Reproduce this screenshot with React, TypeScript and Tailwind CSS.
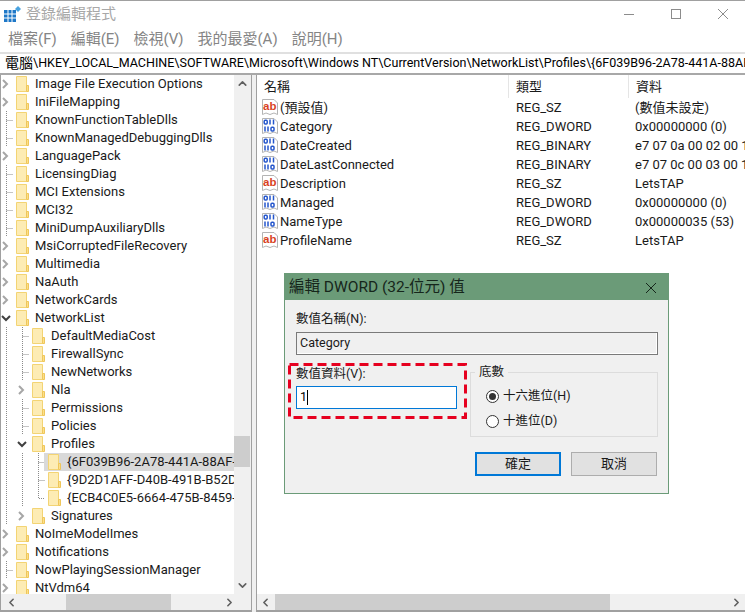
import { ChevronDown, ChevronLeft, ChevronRight, ChevronUp } from 'lucide-react';

type Cell = '' | 'line' | 'tee' | 'corner' | 'closed' | 'open';

const tree: { name: string; cells: Cell[]; selected?: boolean }[] = [
  { name: 'Image File Execution Options', cells: ['closed'] },
  { name: 'IniFileMapping', cells: ['closed'] },
  { name: 'KnownFunctionTableDlls', cells: ['tee'] },
  { name: 'KnownManagedDebuggingDlls', cells: ['tee'] },
  { name: 'LanguagePack', cells: ['closed'] },
  { name: 'LicensingDiag', cells: ['tee'] },
  { name: 'MCI Extensions', cells: ['tee'] },
  { name: 'MCI32', cells: ['tee'] },
  { name: 'MiniDumpAuxiliaryDlls', cells: ['tee'] },
  { name: 'MsiCorruptedFileRecovery', cells: ['closed'] },
  { name: 'Multimedia', cells: ['closed'] },
  { name: 'NaAuth', cells: ['closed'] },
  { name: 'NetworkCards', cells: ['closed'] },
  { name: 'NetworkList', cells: ['open'] },
  { name: 'DefaultMediaCost', cells: ['line', 'tee'] },
  { name: 'FirewallSync', cells: ['line', 'tee'] },
  { name: 'NewNetworks', cells: ['line', 'tee'] },
  { name: 'Nla', cells: ['line', 'closed'] },
  { name: 'Permissions', cells: ['line', 'tee'] },
  { name: 'Policies', cells: ['line', 'tee'] },
  { name: 'Profiles', cells: ['line', 'open'] },
  { name: '{6F039B96-2A78-441A-88AF-', cells: ['line', 'line', 'tee'], selected: true },
  { name: '{9D2D1AFF-D40B-491B-B52D', cells: ['line', 'line', 'tee'] },
  { name: '{ECB4C0E5-6664-475B-8459-', cells: ['line', 'line', 'corner'] },
  { name: 'Signatures', cells: ['line', 'closed'] },
  { name: 'NoImeModelImes', cells: ['closed'] },
  { name: 'Notifications', cells: ['closed'] },
  { name: 'NowPlayingSessionManager', cells: ['tee'] },
  { name: 'NtVdm64', cells: ['closed'] },
];

const values = [
  { name: '(預設值)', kind: 'sz', type: 'REG_SZ', data: '(數值未設定)' },
  { name: 'Category', kind: 'bin', type: 'REG_DWORD', data: '0x00000000 (0)' },
  { name: 'DateCreated', kind: 'bin', type: 'REG_BINARY', data: 'e7 07 0a 00 02 00 1f' },
  { name: 'DateLastConnected', kind: 'bin', type: 'REG_BINARY', data: 'e7 07 0c 00 03 00 1f' },
  { name: 'Description', kind: 'sz', type: 'REG_SZ', data: 'LetsTAP' },
  { name: 'Managed', kind: 'bin', type: 'REG_DWORD', data: '0x00000000 (0)' },
  { name: 'NameType', kind: 'bin', type: 'REG_DWORD', data: '0x00000035 (53)' },
  { name: 'ProfileName', kind: 'sz', type: 'REG_SZ', data: 'LetsTAP' },
];

function TreeCell({ kind }: { kind: Cell }) {
  return (
    <svg width="16" height="18" viewBox="0 0 16 18" className="shrink-0">
      {(kind === 'line' || kind === 'tee' || kind === 'corner') && (
        <path
          d={kind === 'corner' ? 'M6.5 0V9.5H13' : kind === 'tee' ? 'M6.5 0V18M6.5 9.5H13' : 'M6.5 0V18'}
          fill="none"
          stroke="#8a8a8a"
          strokeDasharray="1 1"
        />
      )}
      {kind === 'closed' && <path d="M3 5l4 4-4 4" fill="none" stroke="#a6a6a6" strokeWidth="2" />}
      {kind === 'open' && <path d="M2 7l4 4 4-4" fill="none" stroke="#404040" strokeWidth="2" />}
    </svg>
  );
}

function Folder() {
  return (
    <svg width="13" height="18" viewBox="0 0 13 18" className="shrink-0">
      <path d="M0.5 1.5H10.5V16.5H0.5Z" fill="#fdecb4" stroke="#f3d474" />
      <path d="M10.5 10.5H12.5V16.5H10.5Z" fill="#fbe08a" stroke="#efc65a" />
    </svg>
  );
}

function ValueIcon({ kind }: { kind: string }) {
  return (
    <svg width="16" height="17" viewBox="0 0 16 17" className="shrink-0">
      <path d="M0.5 0.5H12L15.5 4V15.5L12 14L8 15.5L4 14L0.5 15.5Z" fill="#fff" stroke="#b4b4b4" />
      {kind === 'sz' ? (
        <text x="1" y="11" fontSize="11.5" fontWeight="700" fill="#d8431f" fontFamily="Liberation Sans, sans-serif">
          ab
        </text>
      ) : (
        <g fill="none" stroke="#2456cc" strokeWidth="1.5">
          <rect x="2.2" y="2.2" width="3" height="3.8" rx="1" />
          <path d="M8 1.5V6.5M11.5 1.5V6.5" />
          <path d="M3 8.5V13.5M6 8.5V13.5" />
          <rect x="9" y="9.2" width="3" height="3.8" rx="1" />
        </g>
      )}
    </svg>
  );
}

export default function App() {
  return (
    <div
      className="relative w-[745px] h-[612px] overflow-hidden flex flex-col bg-white text-[13px] text-[#1a1a1a]"
      style={{ fontFamily: 'Roboto, "Noto Sans CJK TC", sans-serif' }}
    >
      {/* title bar */}
      <div className="h-[27px] shrink-0 border-t border-[#a0a0a0] flex items-center pl-[4px] text-[#a8a8a8] text-[15px]">
        <svg width="17" height="17" viewBox="0 0 17 17" className="shrink-0 mr-[5px]">
          <path d="M0 4h12v12H0z" fill="#1e78c8" />
          <path d="M4 4v12M8 4v12M0 8h12M0 12h12" stroke="#fff" />
          <path d="M14 0l3 3-3 3-3-3z" fill="#4aa3e0" />
        </svg>
        <span>登錄編輯程式</span>
        <div className="ml-auto flex items-center pr-[17px] gap-[37px]">
          <div className="w-[10px] h-px bg-[#8c8c8c]" />
          <div className="w-[10px] h-[10px] border border-[#8c8c8c]" />
          <svg width="10" height="10" viewBox="0 0 10 10">
            <path d="M0 0l10 10M10 0L0 10" stroke="#8c8c8c" />
          </svg>
        </div>
      </div>

      {/* menu */}
      <div className="h-[24px] shrink-0 flex items-center gap-[14px] pl-[8px] text-[15px] text-[#858585]">
        <span>檔案(F)</span>
        <span>編輯(E)</span>
        <span>檢視(V)</span>
        <span>我的最愛(A)</span>
        <span>說明(H)</span>
      </div>

      {/* address bar */}
      <div className="h-[23px] mt-[1px] shrink-0 border-y-2 border-[#a8a8a8] border-t-[#e0e0e0] flex items-center pl-[5px] text-[12.5px] text-black whitespace-nowrap overflow-hidden bg-white">
        <span className="text-[14px]">電腦</span>\HKEY_LOCAL_MACHINE\SOFTWARE\Microsoft\Windows NT\CurrentVersion\NetworkList\Profiles\{'{'}6F039B96-2A78-441A-88AF
      </div>

      <div className="flex-1 min-h-0 flex bg-[#f0f0f0]">
        {/* key tree */}
        <div className="w-[252px] shrink-0 flex flex-col border-l border-r border-b-2 border-[#a0a0a0] bg-[#f0f0f0]">
          <div className="flex-1 min-h-0 flex">
            <div className="w-[233px] overflow-hidden bg-white">
              {tree.map((row) => (
                <div key={row.name} className="h-[18px] flex items-center -ml-px">
                  {row.cells.map((c, i) => (
                    <TreeCell key={i} kind={c} />
                  ))}
                  <div
                    className={
                      row.selected
                        ? 'flex-1 min-w-0 flex items-center h-[18px] -ml-[4px] pl-[4px] bg-[#d9d9d9]'
                        : 'flex-1 min-w-0 flex items-center h-[18px]'
                    }
                  >
                    <Folder />
                    <span className="pl-[6px] whitespace-nowrap">{row.name}</span>
                  </div>
                </div>
              ))}
            </div>
            <div className="w-[16px] bg-[#f0f0f0] flex flex-col items-center">
              <div className="h-[17px] flex items-center text-[#606060]">
                <ChevronUp size={13} strokeWidth={3} />
              </div>
              <div className="h-[344px]" />
              <div className="w-full h-[31px] shrink-0 bg-[#cdcdcd]" />
              <div className="flex-1" />
              <div className="h-[17px] flex items-center text-[#606060]">
                <ChevronDown size={13} strokeWidth={3} />
              </div>
            </div>
          </div>
          <div className="h-[16px] shrink-0 flex items-center bg-[#f0f0f0]">
            <div className="w-[65px] flex pl-[4px] text-[#606060]">
              <ChevronLeft size={13} strokeWidth={3} />
            </div>
            <div className="w-[105px] h-full bg-[#cdcdcd]" />
            <div className="flex-1" />
            <div className="w-[28px] text-[#606060]">
              <ChevronRight size={13} strokeWidth={3} />
            </div>
          </div>
        </div>

        {/* value list */}
        <div className="ml-[4px] flex-1 min-w-0 flex flex-col border-l border-b-2 border-[#a0a0a0] bg-white">
          <div className="flex-1 min-h-0 overflow-hidden">
            <div className="h-[23px] flex items-center">
              <div className="w-[251px] shrink-0 pl-[7px]">名稱</div>
              <div className="w-[120px] shrink-0 pl-[7px] border-l border-[#e5e5e5] h-full flex items-center">類型</div>
              <div className="flex-1 pl-[7px] border-l border-[#e5e5e5] h-full flex items-center">資料</div>
            </div>
            {values.map((v) => (
              <div key={v.name} className="h-[19px] flex items-center whitespace-nowrap">
                <div className="w-[251px] shrink-0 pl-[5px] flex items-center gap-[2px]">
                  <ValueIcon kind={v.kind} />
                  <span>{v.name}</span>
                </div>
                <div className="w-[120px] shrink-0 pl-[8px]">{v.type}</div>
                <div className="flex-1 pl-[7px]">{v.data}</div>
              </div>
            ))}
          </div>
          <div className="h-[16px] shrink-0 flex items-center bg-[#f0f0f0]">
            <div className="w-[18px] pl-[2px] text-[#606060]">
              <ChevronLeft size={13} strokeWidth={3} />
            </div>
            <div className="w-[335px] h-full bg-[#cdcdcd]" />
            <div className="flex-1" />
            <div className="w-[15px] text-[#606060]">
              <ChevronRight size={13} strokeWidth={3} />
            </div>
          </div>
        </div>
      </div>

      {/* DWORD dialog */}
      <div className="absolute left-[284px] top-[273px] w-[385px] h-[221px] border border-[#6b9b78] bg-[#f0f0f0] flex flex-col">
        <div className="h-[26px] shrink-0 bg-[#6b9b78] flex items-center pl-[4px] pr-[11px] pt-[2px] text-[15.5px] text-[#16261b]">
          <span>編輯 DWORD (32-位元) 值</span>
          <svg width="12" height="12" viewBox="0 0 12 12" className="ml-auto">
            <path d="M1 1l10 10M11 1L1 11" stroke="#16261b" />
          </svg>
        </div>
        <div className="flex-1 flex flex-col pl-[11px] pr-[10px] text-[12.5px]">
          <div className="h-[19px] mt-[10px] flex items-center">數值名稱(N):</div>
          <div className="h-[23px] mt-[3px] border border-[#7a7a7a] bg-[#f0f0f0] flex items-center pl-[3px] shadow-[inset_-1px_-1px_0_#fff]">
            Category
          </div>
          <div className="flex mt-[8px]">
            <div className="w-[161px] shrink-0">
              <div className="h-[18px] mt-[2px] flex items-center">數值資料(V):</div>
              <div className="h-[23px] mt-[3px] border border-[#0078d7] bg-white flex items-center pl-[3px] text-black">
                1<span className="w-px h-[15px] bg-black" />
              </div>
            </div>
            <div className="ml-[13px] flex-1 relative mt-[9px] h-[65px] border border-[#dcdcdc] pl-[15px] pt-[14px]">
              <span className="absolute left-[4px] -top-[10px] px-[4px] bg-[#f0f0f0]">底數</span>
              <label className="h-[19px] flex items-center gap-[4px]">
                <span className="w-[13px] h-[13px] rounded-full border border-[#333] bg-white flex items-center justify-center">
                  <span className="w-[7px] h-[7px] rounded-full bg-[#333]" />
                </span>
                十六進位(H)
              </label>
              <label className="h-[19px] mt-[6px] flex items-center gap-[4px]">
                <span className="w-[13px] h-[13px] rounded-full border border-[#333] bg-white" />
                十進位(D)
              </label>
            </div>
          </div>
          <div className="flex justify-end gap-[10px] mt-[15px] pr-[1px] text-[13px]">
            <button className="w-[86px] h-[24px] border-2 border-[#0078d7] bg-[#e1e1e1]">確定</button>
            <button className="w-[86px] h-[24px] border border-[#adadad] bg-[#e1e1e1]">取消</button>
          </div>
        </div>
      </div>

      {/* red highlight */}
      <svg width="181" height="58" viewBox="0 0 181 58" className="absolute left-[287px] top-[362px]">
        <rect x="2.5" y="2.5" width="176" height="53" fill="none" stroke="#e6001f" strokeWidth="3" strokeDasharray="9 5" />
      </svg>
    </div>
  );
}
